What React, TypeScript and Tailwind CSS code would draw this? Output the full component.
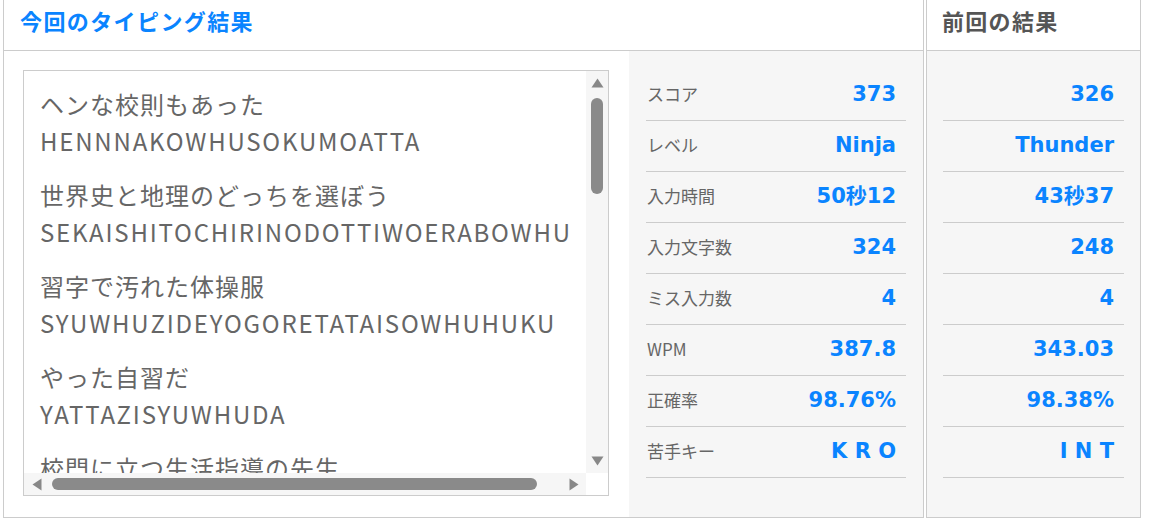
import React from 'react'

const jp = { fontFamily: '"Noto Sans CJK JP", "Noto Sans", sans-serif' }
const num = { fontFamily: '"DejaVu Sans", "Noto Sans CJK JP", sans-serif' }

const lines = [
  { ja: 'ヘンな校則もあった', ro: 'HENNNAKOWHUSOKUMOATTA' },
  { ja: '世界史と地理のどっちを選ぼう', ro: 'SEKAISHITOCHIRINODOTTIWOERABOWHU' },
  { ja: '習字で汚れた体操服', ro: 'SYUWHUZIDEYOGORETATAISOWHUHUKU' },
  { ja: 'やった自習だ', ro: 'YATTAZISYUWHUDA' },
  { ja: '校門に立つ生活指導の先生', ro: 'KOUMONNNITATUSEIKATUSIDOUNOSENNSEI' },
]

const current = [
  ['スコア', '373'],
  ['レベル', 'Ninja'],
  ['入力時間', '50秒12'],
  ['入力文字数', '324'],
  ['ミス入力数', '4'],
  ['WPM', '387.8'],
  ['正確率', '98.76%'],
  ['苦手キー', 'K R O'],
]

const previous = ['326', 'Thunder', '43秒37', '248', '4', '343.03', '98.38%', 'I N T']

export default function App() {
  return (
    <div className="flex items-start pl-[3px] bg-white" style={jp}>
      <div className="w-[921px] h-[518px] border-x border-b border-[#cccccc] flex flex-col">
        <div className="h-[51px] shrink-0 border-b border-[#cccccc] pl-[16px] pt-[5px]">
          <h2 className="text-[22px] font-bold text-[#0a84ff] leading-[30px] tracking-[1.4px]">今回のタイピング結果</h2>
        </div>
        <div className="flex flex-1">
          <div className="w-[625px] pl-[19px] pt-[19px]">
            <ScrollBox />
          </div>
          <div className="flex-1 bg-[#f6f6f6] px-[17px] pt-[19px]">
            {current.map(([label, value]) => (
              <Row key={label} label={label} value={value} />
            ))}
          </div>
        </div>
      </div>
      <div className="ml-[2px] w-[215px] h-[518px] border-x border-b border-[#cccccc] flex flex-col">
        <div className="h-[51px] shrink-0 border-b border-[#cccccc] pl-[15px] pt-[5px]">
          <h2 className="text-[22px] font-bold text-[#555555] leading-[30px] tracking-[1.3px]">前回の結果</h2>
        </div>
        <div className="flex-1 bg-[#f6f6f6] px-[16px] pt-[19px]">
          {previous.map((value, i) => (
            <Row key={i} label="" value={value} />
          ))}
        </div>
      </div>
    </div>
  )
}

function Row({ label, value }: { label: string; value: string }) {
  return (
    <div className="h-[51px] border-b border-[#cccccc] flex items-center justify-between pl-px pr-[10px]">
      <span className="text-[17px] text-[#666666] -mt-[2px]">{label}</span>
      <span className="text-[21px] font-bold text-[#0a84ff]" style={num}>{value}</span>
    </div>
  )
}

function ScrollBox() {
  return (
    <div className="w-[586px] h-[426px] border border-[#cccccc] flex flex-col bg-white">
      <div className="flex flex-1 min-h-0">
        <div className="flex-1 overflow-hidden pl-[16px] pt-[14px]">
          {lines.map((l) => (
            <div key={l.ro} className="mb-[17px] text-[24px] leading-[37px] text-[#666666] whitespace-nowrap">
              <p className="tracking-[1px]">{l.ja}</p>
              <p className="tracking-[1.8px]">{l.ro}</p>
            </div>
          ))}
        </div>
        <div className="w-[22px] bg-[#f6f6f6] flex flex-col items-center pt-[7px] pb-[7px]">
          <svg width="13" height="10" viewBox="0 0 13 10"><path d="M6.5 0.5 L12.5 9.5 L0.5 9.5 Z" fill="#888888" /></svg>
          <div className="mt-[10px] w-[12px] h-[96px] rounded-full bg-[#8a8a8a]" />
          <div className="flex-1" />
          <svg width="13" height="10" viewBox="0 0 13 10"><path d="M6.5 9.5 L12.5 0.5 L0.5 0.5 Z" fill="#888888" /></svg>
        </div>
      </div>
      <div className="h-[22px] shrink-0 flex">
        <div className="flex-1 bg-[#f6f6f6] flex items-center pl-[8px] pr-[7px]">
          <svg width="10" height="13" viewBox="0 0 10 13"><path d="M0.5 6.5 L9.5 0.5 L9.5 12.5 Z" fill="#888888" /></svg>
          <div className="ml-[10px] w-[485px] h-[12px] rounded-full bg-[#8a8a8a]" />
          <div className="flex-1" />
          <svg width="10" height="13" viewBox="0 0 10 13"><path d="M9.5 6.5 L0.5 0.5 L0.5 12.5 Z" fill="#888888" /></svg>
        </div>
        <div className="w-[22px] bg-white" />
      </div>
    </div>
  )
}
